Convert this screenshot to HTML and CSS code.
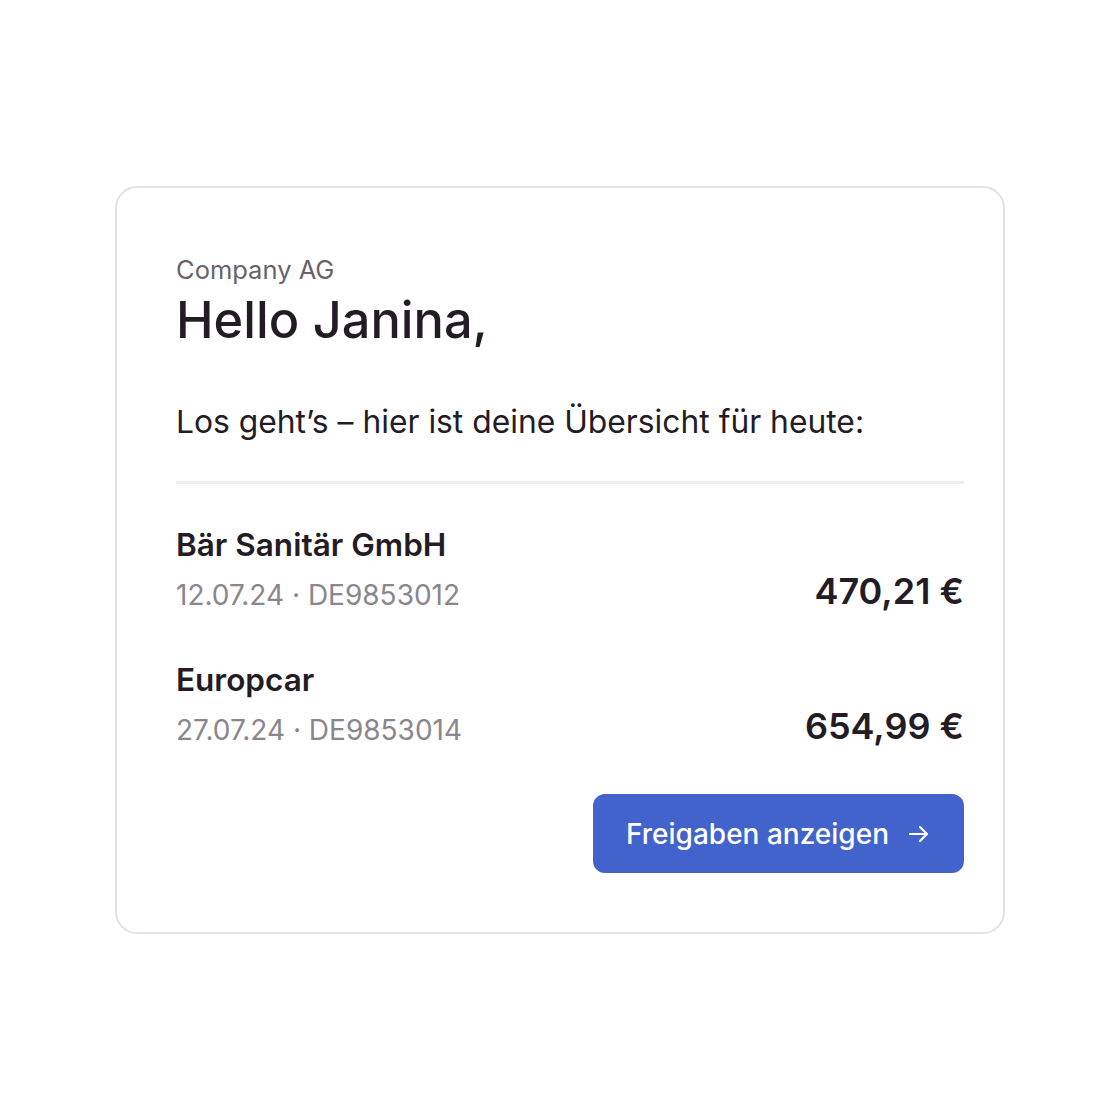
FILE: index.html
```html
<!DOCTYPE html>
<html lang="de">
<head>
<meta charset="utf-8">
<title>Übersicht</title>
<link rel="stylesheet" href="styles.css">
</head>
<body>
<main class="page">
  <section class="card">
    <header class="greeting">
      <div class="company">Company AG</div>
      <h1 class="hello">Hello Janina,</h1>
    </header>
    <p class="intro">Los geht’s – hier ist deine Übersicht für heute:</p>
    <hr class="divider">
    <ul class="items">
      <li class="item">
        <div class="item-info">
          <div class="item-name">Bär Sanitär GmbH</div>
          <div class="item-meta">12.07.24 · DE9853012</div>
        </div>
        <div class="item-amount">470,21 €</div>
      </li>
      <li class="item">
        <div class="item-info">
          <div class="item-name">Europcar</div>
          <div class="item-meta">27.07.24 · DE9853014</div>
        </div>
        <div class="item-amount">654,99 €</div>
      </li>
    </ul>
    <div class="actions">
      <button class="btn">Freigaben anzeigen
        <svg class="arrow" width="24" height="24" viewBox="0 0 24 24" fill="none" stroke="currentColor" stroke-width="2.2" stroke-linecap="round" stroke-linejoin="round"><path d="M3 12h17M13 5l7 7-7 7"/></svg>
      </button>
    </div>
  </section>
</main>
</body>
</html>
```
FILE: styles.css
```css
* { box-sizing: border-box; }
html, body { margin: 0; padding: 0; background: #ffffff; }
body {
  font-family: Inter, "Noto Sans", "Liberation Sans", sans-serif;
  color: #231c25;
}
.page {
  width: 1120px;
  height: 1120px;
  display: flex;
  align-items: center;
  justify-content: center;
}
.card {
  width: 890px;
  height: 748px;
  border: 2px solid #e2e2e2;
  border-radius: 22px;
  padding: 60px 39px 59px 59px;
  display: flex;
  flex-direction: column;
  background: #fff;
}
.greeting { display: flex; flex-direction: column; }
.company {
  font-size: 25.5px;
  line-height: 30px;
  color: #67626a;
  margin-top: 7px;
}
.hello {
  margin: 5px 0 0;
  font-size: 50.5px;
  line-height: 60px;
  font-weight: 500;
  color: #231c25;
}
.intro {
  margin: 52px 0 0;
  font-size: 31.8px;
  line-height: 40px;
  color: #231c25;
}
.divider {
  border: 0;
  height: 3px;
  background: #efefef;
  margin: 39px 0 0;
}
.items {
  list-style: none;
  margin: 41px 0 0;
  padding: 0;
  display: flex;
  flex-direction: column;
  gap: 47px;
}
.item {
  display: flex;
  justify-content: space-between;
  align-items: flex-end;
}
.item-info { display: flex; flex-direction: column; gap: 12px; }
.item-name {
  font-size: 31.5px;
  line-height: 40px;
  font-weight: 600;
  color: #231c25;
}
.item-meta {
  font-size: 28px;
  line-height: 36px;
  color: #8a868c;
}
.item-amount {
  font-size: 36px;
  line-height: 44px;
  font-weight: 600;
  color: #231c25;
  margin-bottom: 0;
}
.actions {
  margin-top: auto;
  display: flex;
  justify-content: flex-end;
}
.btn {
  width: 371px;
  height: 79px;
  border: 0;
  border-radius: 12px;
  background: #4263cc;
  color: #fff;
  font-family: inherit;
  font-size: 28px;
  font-weight: 500;
  display: flex;
  align-items: center;
  justify-content: center;
  gap: 18px;
  padding: 0;
}
.arrow { display: block; }
```
